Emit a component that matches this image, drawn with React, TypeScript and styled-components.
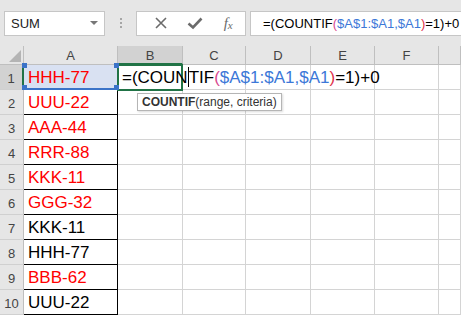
import React from "react";
import styled, { createGlobalStyle } from "styled-components";

const rows = [
  { v: "HHH-77", red: true },
  { v: "UUU-22", red: true },
  { v: "AAA-44", red: true },
  { v: "RRR-88", red: true },
  { v: "KKK-11", red: true },
  { v: "GGG-32", red: true },
  { v: "KKK-11", red: false },
  { v: "HHH-77", red: false },
  { v: "BBB-62", red: true },
  { v: "UUU-22", red: false },
];

const cols = ["A", "B", "C", "D", "E", "F", ""];

function App() {
  return (
    <>
      <GlobalStyle />
      <Page>
        <Toolbar>
          <NameBox>
            <span>SUM</span>
            <Caret />
          </NameBox>
          <Grip>
            <i />
            <i />
            <i />
          </Grip>
          <IconBox>
            <IconSlot>
              <svg width="14" height="14" viewBox="0 0 14 14">
                <path d="M2 2 L12 12 M12 2 L2 12" stroke="#6b6b6b" strokeWidth="1.6" />
              </svg>
            </IconSlot>
            <IconSlot>
              <svg width="16" height="14" viewBox="0 0 16 14">
                <path d="M1.5 7.5 L6 11.5 L14.5 2.5" stroke="#6b6b6b" strokeWidth="2.6" fill="none" />
              </svg>
            </IconSlot>
            <IconSlot>
              <Fx>
                f<sub>x</sub>
              </Fx>
            </IconSlot>
          </IconBox>
          <FormulaInput>
            <FormulaText size={13}>
              =(COUNTIF<Paren>(</Paren>
              <Ref>$A$1:$A1,$A1</Ref>
              <Close>)</Close>=1)+0
            </FormulaText>
          </FormulaInput>
        </Toolbar>

        <Sheet>
          <Corner>
            <svg width="12" height="12" viewBox="0 0 12 12">
              <path d="M12 0 L12 12 L0 12 Z" fill="#b4b4b4" />
            </svg>
          </Corner>
          {cols.map((c, i) => (
            <ColHead key={i} active={c === "B"}>
              {c}
            </ColHead>
          ))}

          {rows.map((r, i) => (
            <React.Fragment key={i}>
              <RowHead active={i === 0}>{i + 1}</RowHead>
              <ACell red={r.red} picked={i === 0}>
                {r.v}
                {i === 0 && (
                  <>
                    <Handle style={{ left: -2, top: -2 }} />
                    <Handle style={{ right: -2, top: -2 }} />
                    <Handle style={{ left: -2, bottom: -2 }} />
                    <Handle style={{ right: -2, bottom: -2 }} />
                  </>
                )}
              </ACell>
              {i === 0 ? (
                <EditCell>
                  <EditText size={17}>
                    =(COUN<CursorMark />TIF<Paren>(</Paren>
                    <Ref>$A$1:$A1,$A1</Ref>
                    <Close>)</Close>=1)+0
                  </EditText>
                  <Tip>
                    <b>COUNTIF</b>(range, criteria)
                  </Tip>
                </EditCell>
              ) : (
                <Cell />
              )}
              <Cell />
              <Cell />
              <Cell />
              <Cell />
              <Cell />
            </React.Fragment>
          ))}
        </Sheet>
      </Page>
    </>
  );
}

const GlobalStyle = createGlobalStyle`
  html, body {
    margin: 0;
    padding: 0;
    background: #ffffff;
    font-family: "Liberation Sans", Arial, sans-serif;
  }
`;

const Page = styled.div`
  width: 461px;
  height: 319px;
  overflow: hidden;
  background: #ffffff;
`;

const Toolbar = styled.div`
  display: flex;
  align-items: center;
  height: 46px;
  padding: 0 0 0 4px;
  box-sizing: border-box;
  background: #e6e6e6;
  padding-top: 0;
`;

const NameBox = styled.div`
  display: flex;
  align-items: center;
  justify-content: space-between;
  width: 101px;
  height: 25px;
  box-sizing: border-box;
  border: 1px solid #c6c6c6;
  background: #ffffff;
  padding: 0 6px 0 6px;
  font-size: 13px;
  color: #222;
`;

const Caret = styled.span`
  width: 0;
  height: 0;
  border-left: 4px solid transparent;
  border-right: 4px solid transparent;
  border-top: 4px solid #777;
`;

const Grip = styled.div`
  display: flex;
  flex-direction: column;
  gap: 2px;
  margin: 0 14px 0 15px;
  i {
    display: block;
    width: 2px;
    height: 2px;
    background: #a6a6a6;
  }
`;

const IconBox = styled.div`
  display: flex;
  align-items: center;
  width: 110px;
  height: 25px;
  box-sizing: border-box;
  border: 1px solid #c6c6c6;
  background: #ffffff;
  padding-left: 7px;
`;

const IconSlot = styled.div`
  display: flex;
  align-items: center;
  justify-content: center;
  width: 36px;
  height: 100%;
`;

const Fx = styled.span`
  font-family: "Liberation Serif", serif;
  font-style: italic;
  font-size: 15px;
  color: #6b6b6b;
  sub {
    font-size: 11px;
    vertical-align: -1px;
  }
`;

const FormulaInput = styled.div`
  flex: 1;
  height: 25px;
  margin-left: 4px;
  box-sizing: border-box;
  border: 1px solid #c6c6c6;
  border-right: none;
  background: #ffffff;
  display: flex;
  align-items: center;
  padding-left: 12px;
  overflow: hidden;
`;

const FormulaText = styled.span<{ size: number }>`
  font-size: ${(p) => p.size}px;
  color: #000;
  white-space: nowrap;
`;

const Paren = styled.span`
  color: #d9488f;
`;

const Ref = styled.span`
  color: #3c78d8;
`;

const Close = styled.span`
  color: #e0314b;
`;

const Sheet = styled.div`
  display: grid;
  grid-template-columns: 24px 94px 65px 63px 65px 64px 64px 1fr;
  grid-template-rows: 19px repeat(10, 25px);
`;

const Corner = styled.div`
  background: #e6e6e6;
  border-right: 1px solid #bfbfbf;
  border-bottom: 1px solid #bfbfbf;
  box-sizing: border-box;
  display: flex;
  align-items: flex-end;
  justify-content: flex-end;
  padding: 0 2px 2px 0;
`;

const ColHead = styled.div<{ active?: boolean }>`
  background: ${(p) => (p.active ? "#d2d2d2" : "#e6e6e6")};
  border-right: 1px solid #bfbfbf;
  border-bottom: ${(p) => (p.active ? "2px solid #217346" : "1px solid #bfbfbf")};
  box-sizing: border-box;
  display: flex;
  align-items: center;
  justify-content: center;
  font-size: 13px;
  color: #444;
  padding-top: 1px;
`;

const RowHead = styled.div<{ active?: boolean }>`
  background: ${(p) => (p.active ? "#d2d2d2" : "#e6e6e6")};
  border-right: ${(p) => (p.active ? "2px solid #217346" : "1px solid #bfbfbf")};
  border-bottom: 1px solid #d0d0d0;
  box-sizing: border-box;
  display: flex;
  align-items: center;
  justify-content: center;
  font-size: 13px;
  color: #444;
  padding-top: 2px;
`;

const Cell = styled.div`
  border-right: 1px solid #d4d4d4;
  border-bottom: 1px solid #d4d4d4;
  box-sizing: border-box;
`;

const ACell = styled.div<{ red?: boolean; picked?: boolean }>`
  position: relative;
  border-right: 1px solid #000;
  border-bottom: ${(p) => (p.picked ? "2px solid #3b73c8" : "1px solid #000")};
  box-sizing: border-box;
  background: ${(p) => (p.picked ? "#d9e1f2" : "transparent")};
  color: ${(p) => (p.red ? "#ff0000" : "#000")};
  font-size: 17px;
  line-height: 24px;
  padding-left: 4px;
  padding-top: 1px;
  white-space: nowrap;
`;

const Handle = styled.span`
  position: absolute;
  width: 5px;
  height: 5px;
  background: #3b73c8;
  z-index: 4;
`;

const EditCell = styled.div`
  position: relative;
  margin-left: -1px;
  margin-top: -1px;
  height: 27px;
  border: 2px solid #217346;
  box-sizing: border-box;
  z-index: 2;
`;

const EditText = styled.div<{ size: number }>`
  position: absolute;
  left: 1px;
  top: 0;
  padding: 0 4px 0 2px;
  font-size: ${(p) => p.size}px;
  line-height: 23px;
  white-space: nowrap;
  color: #000;
  background: transparent;
`;

const CursorMark = styled.span`
  display: inline-block;
  width: 1px;
  height: 20px;
  background: #000;
  vertical-align: -4px;
`;

const Tip = styled.div`
  position: absolute;
  left: 18px;
  top: 27px;
  height: 18px;
  padding: 0 4px;
  box-sizing: border-box;
  border: 1px solid #b5b5b5;
  background: #ffffff;
  box-shadow: 1px 1px 2px rgba(0, 0, 0, 0.15);
  font-size: 12px;
  line-height: 16px;
  color: #333;
  white-space: nowrap;
  z-index: 5;
  b {
    font-weight: bold;
  }
`;

export default App;
